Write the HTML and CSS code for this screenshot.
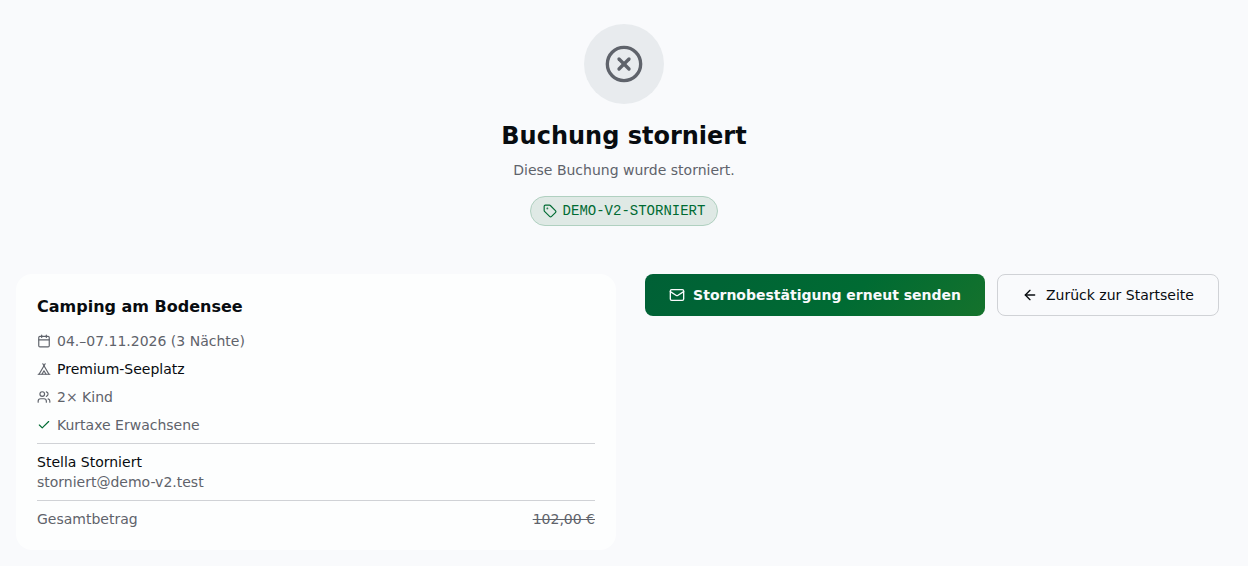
FILE: index.html
```html
<!DOCTYPE html>
<html lang="de">
<head>
<meta charset="utf-8">
<meta name="viewport" content="width=device-width, initial-scale=1">
<title>Buchung storniert</title>
<link rel="stylesheet" href="styles.css">
</head>
<body>
<main class="page">
  <header class="hero">
    <div class="hero-badge">
      <svg class="icon icon-xl" viewBox="0 0 24 24" aria-hidden="true"><circle cx="12" cy="12" r="10"/><path d="m15 9-6 6"/><path d="m9 9 6 6"/></svg>
    </div>
    <h1 class="hero-title">Buchung storniert</h1>
    <p class="hero-text">Diese Buchung wurde storniert.</p>
    <div class="code">
      <svg class="icon icon-sm" viewBox="0 0 24 24" aria-hidden="true"><path d="M12.586 2.586A2 2 0 0 0 11.172 2H4a2 2 0 0 0-2 2v7.172a2 2 0 0 0 .586 1.414l8.704 8.704a2.426 2.426 0 0 0 3.42 0l6.58-6.58a2.426 2.426 0 0 0 0-3.42z"/><circle cx="7.5" cy="7.5" r=".5" fill="currentColor"/></svg>
      <span>DEMO-V2-STORNIERT</span>
    </div>
  </header>

  <div class="columns">
    <section class="card">
      <h2 class="card-title">Camping am Bodensee</h2>
      <ul class="facts">
        <li class="fact">
          <svg class="icon icon-sm" viewBox="0 0 24 24" aria-hidden="true"><path d="M8 2v4"/><path d="M16 2v4"/><rect width="18" height="18" x="3" y="4" rx="2"/><path d="M3 10h18"/></svg>
          <span>04.–07.11.2026 (3 Nächte)</span>
        </li>
        <li class="fact">
          <svg class="icon icon-sm" viewBox="0 0 24 24" aria-hidden="true"><path d="M3.5 21 14 3"/><path d="M20.5 21 10 3"/><path d="M15.5 21 12 15l-3.5 6"/><path d="M2 21h20"/></svg>
          <span class="strong">Premium-Seeplatz</span>
        </li>
        <li class="fact">
          <svg class="icon icon-sm" viewBox="0 0 24 24" aria-hidden="true"><path d="M16 21v-2a4 4 0 0 0-4-4H6a4 4 0 0 0-4 4v2"/><circle cx="9" cy="7" r="4"/><path d="M22 21v-2a4 4 0 0 0-3-3.87"/><path d="M16 3.13a4 4 0 0 1 0 7.75"/></svg>
          <span>2× Kind</span>
        </li>
        <li class="fact">
          <svg class="icon icon-sm icon-ok" viewBox="0 0 24 24" aria-hidden="true"><path d="M20 6 9 17l-5-5"/></svg>
          <span>Kurtaxe Erwachsene</span>
        </li>
      </ul>
      <div class="part">
        <p class="strong">Stella Storniert</p>
        <p>storniert@demo-v2.test</p>
      </div>
      <div class="part total">
        <span>Gesamtbetrag</span>
        <s>102,00 €</s>
      </div>
    </section>

    <div class="actions">
      <button class="button button-primary" type="button">
        <svg class="icon" viewBox="0 0 24 24" aria-hidden="true"><rect width="20" height="16" x="2" y="4" rx="2"/><path d="m22 7-8.991 5.727a2 2 0 0 1-2.009 0L2 7"/></svg>
        Stornobestätigung erneut senden
      </button>
      <a class="button button-outline" href="#">
        <svg class="icon" viewBox="0 0 24 24" aria-hidden="true"><path d="m12 19-7-7 7-7"/><path d="M19 12H5"/></svg>
        Zurück zur Startseite
      </a>
    </div>
  </div>
</main>
</body>
</html>
```

FILE: styles.css
```css
*,
*::before,
*::after {
  box-sizing: border-box;
}

body,
h1,
h2,
p,
ul {
  margin: 0;
  padding: 0;
}

body {
  background: #f9fafc;
  color: #080c10;
  font-family: "DejaVu Sans", sans-serif;
  font-size: 14px;
  line-height: 20px;
}

.page {
  display: grid;
  gap: 48px;
  padding: 24px 16px 16px;
}

.icon {
  flex: none;
  width: 16px;
  height: 16px;
  fill: none;
  stroke: currentColor;
  stroke-width: 2;
  stroke-linecap: round;
  stroke-linejoin: round;
}

.icon-sm {
  width: 14px;
  height: 14px;
}

.icon-xl {
  width: 40px;
  height: 40px;
}

.icon-ok {
  color: #006b33;
}

.hero {
  display: flex;
  flex-direction: column;
  align-items: center;
  text-align: center;
}

.hero-badge {
  display: grid;
  place-items: center;
  width: 80px;
  height: 80px;
  margin-bottom: 16px;
  border-radius: 50%;
  background: #e8ebee;
  color: #5f636b;
}

.hero-title {
  margin-bottom: 8px;
  font-size: 24px;
  line-height: 32px;
  font-weight: 700;
}

.hero-text {
  margin-bottom: 16px;
  color: #5f636b;
}

.code {
  display: flex;
  align-items: center;
  gap: 6px;
  padding: 4px 12px;
  border: 1px solid #b0d0c0;
  border-radius: 999px;
  background: #dfe9e5;
  color: #006b33;
  font-family: "Liberation Mono", monospace;
}

.columns {
  display: grid;
  grid-template-columns: repeat(auto-fit, minmax(min(100%, 360px), 1fr));
  gap: 16px;
  align-items: start;
}

.card {
  padding: 21px;
  border-radius: 16px;
  background: #fdfefe;
  color: #5f636b;
}

.card-title {
  margin-bottom: 12px;
  color: #080c10;
  font-size: 16px;
  line-height: 24px;
  font-weight: 700;
}

.facts {
  display: grid;
  gap: 8px;
  margin-bottom: 8px;
  list-style: none;
}

.fact {
  display: flex;
  align-items: center;
  gap: 6px;
}

.strong {
  color: #080c10;
}

.part {
  padding: 8px 0;
  border-top: 1px solid #d0d2d6;
}

.part:last-child {
  padding-bottom: 0;
}

.total {
  display: flex;
  justify-content: space-between;
}

.actions {
  display: flex;
  flex-wrap: wrap;
  justify-content: center;
  gap: 12px;
}

.button {
  display: inline-flex;
  align-items: center;
  justify-content: center;
  gap: 8px;
  min-height: 42px;
  border-radius: 8px;
  font: inherit;
  text-decoration: none;
  white-space: nowrap;
  cursor: pointer;
}

.button-primary {
  padding: 0 24px;
  border: 0;
  background: linear-gradient(135deg, #006036 0%, #006b33 60%, #15722c 100%);
  color: #f9fafc;
  font-weight: 700;
}

.button-outline {
  padding: 0 24px;
  border: 1px solid #d0d2d6;
  color: #080c10;
}
```
